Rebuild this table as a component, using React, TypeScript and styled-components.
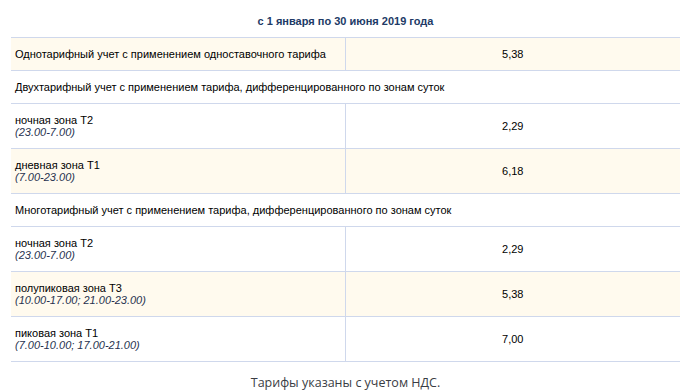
import React from "react";
import styled, { createGlobalStyle } from "styled-components";

const Global = createGlobalStyle`
  html, body { margin: 0; padding: 0; background: #fff; }
  body { font-family: "Liberation Sans", Arial, sans-serif; }
`;

const Wrap = styled.div`
  padding-left: 11px;
  width: 669px;
`;

const Table = styled.table`
  width: 669px;
  border-collapse: collapse;
  table-layout: fixed;
  font-family: "Liberation Sans", Arial, sans-serif;
  font-size: 11px;
  line-height: 12px;
  color: #000;
`;

const HeadCell = styled.th`
  padding: 15px 0 10px;
  font-weight: bold;
  color: #213a66;
  text-align: center;
  border-bottom: 1px solid #cfd8ec;
`;

const Row = styled.tr<{ $cream?: boolean }>`
  background: ${(p) => (p.$cream ? "#fffaee" : "#fff")};
`;

const NameCell = styled.td<{ $split?: boolean }>`
  padding: 10px 4px;
  text-align: left;
  border-bottom: 1px solid #cfd8ec;
  border-right: ${(p) => (p.$split ? "1px solid #cfd8ec" : "none")};
  vertical-align: middle;
`;

const ValueCell = styled.td`
  padding: 10px 4px;
  text-align: center;
  border-bottom: 1px solid #cfd8ec;
  vertical-align: middle;
`;

const Hours = styled.i`
  display: block;
  color: #27324f;
`;

const Note = styled.p`
  margin: 12px 0 0;
  text-align: center;
  font-family: "Open Sans", sans-serif;
  font-size: 12.5px;
  line-height: 18px;
  color: #3a3d44;
`;

type Item =
  | { kind: "group"; text: string }
  | { kind: "row"; name: string; hours?: string; value: string; cream?: boolean };

const items: Item[] = [
  { kind: "row", name: "Однотарифный учет с применением одноставочного тарифа", value: "5,38", cream: true },
  { kind: "group", text: "Двухтарифный учет с применением тарифа, дифференцированного по зонам суток" },
  { kind: "row", name: "ночная зона Т2", hours: "(23.00-7.00)", value: "2,29" },
  { kind: "row", name: "дневная зона Т1", hours: "(7.00-23.00)", value: "6,18", cream: true },
  { kind: "group", text: "Многотарифный учет с применением тарифа, дифференцированного по зонам суток" },
  { kind: "row", name: "ночная зона Т2", hours: "(23.00-7.00)", value: "2,29" },
  { kind: "row", name: "полупиковая зона Т3", hours: "(10.00-17.00; 21.00-23.00)", value: "5,38", cream: true },
  { kind: "row", name: "пиковая зона Т1", hours: "(7.00-10.00; 17.00-21.00)", value: "7,00" },
];

export default function App() {
  return (
    <Wrap>
      <Global />
      <Table>
        <colgroup>
          <col style={{ width: 334 }} />
          <col style={{ width: 335 }} />
        </colgroup>
        <thead>
          <tr>
            <HeadCell colSpan={2}>с 1 января по 30 июня 2019 года</HeadCell>
          </tr>
        </thead>
        <tbody>
          {items.map((it, i) =>
            it.kind === "group" ? (
              <Row key={i}>
                <NameCell colSpan={2}>{it.text}</NameCell>
              </Row>
            ) : (
              <Row key={i} $cream={it.cream}>
                <NameCell $split>
                  {it.name}
                  {it.hours && <Hours>{it.hours}</Hours>}
                </NameCell>
                <ValueCell>{it.value}</ValueCell>
              </Row>
            )
          )}
        </tbody>
      </Table>
      <Note>Тарифы указаны с учетом НДС.</Note>
    </Wrap>
  );
}
